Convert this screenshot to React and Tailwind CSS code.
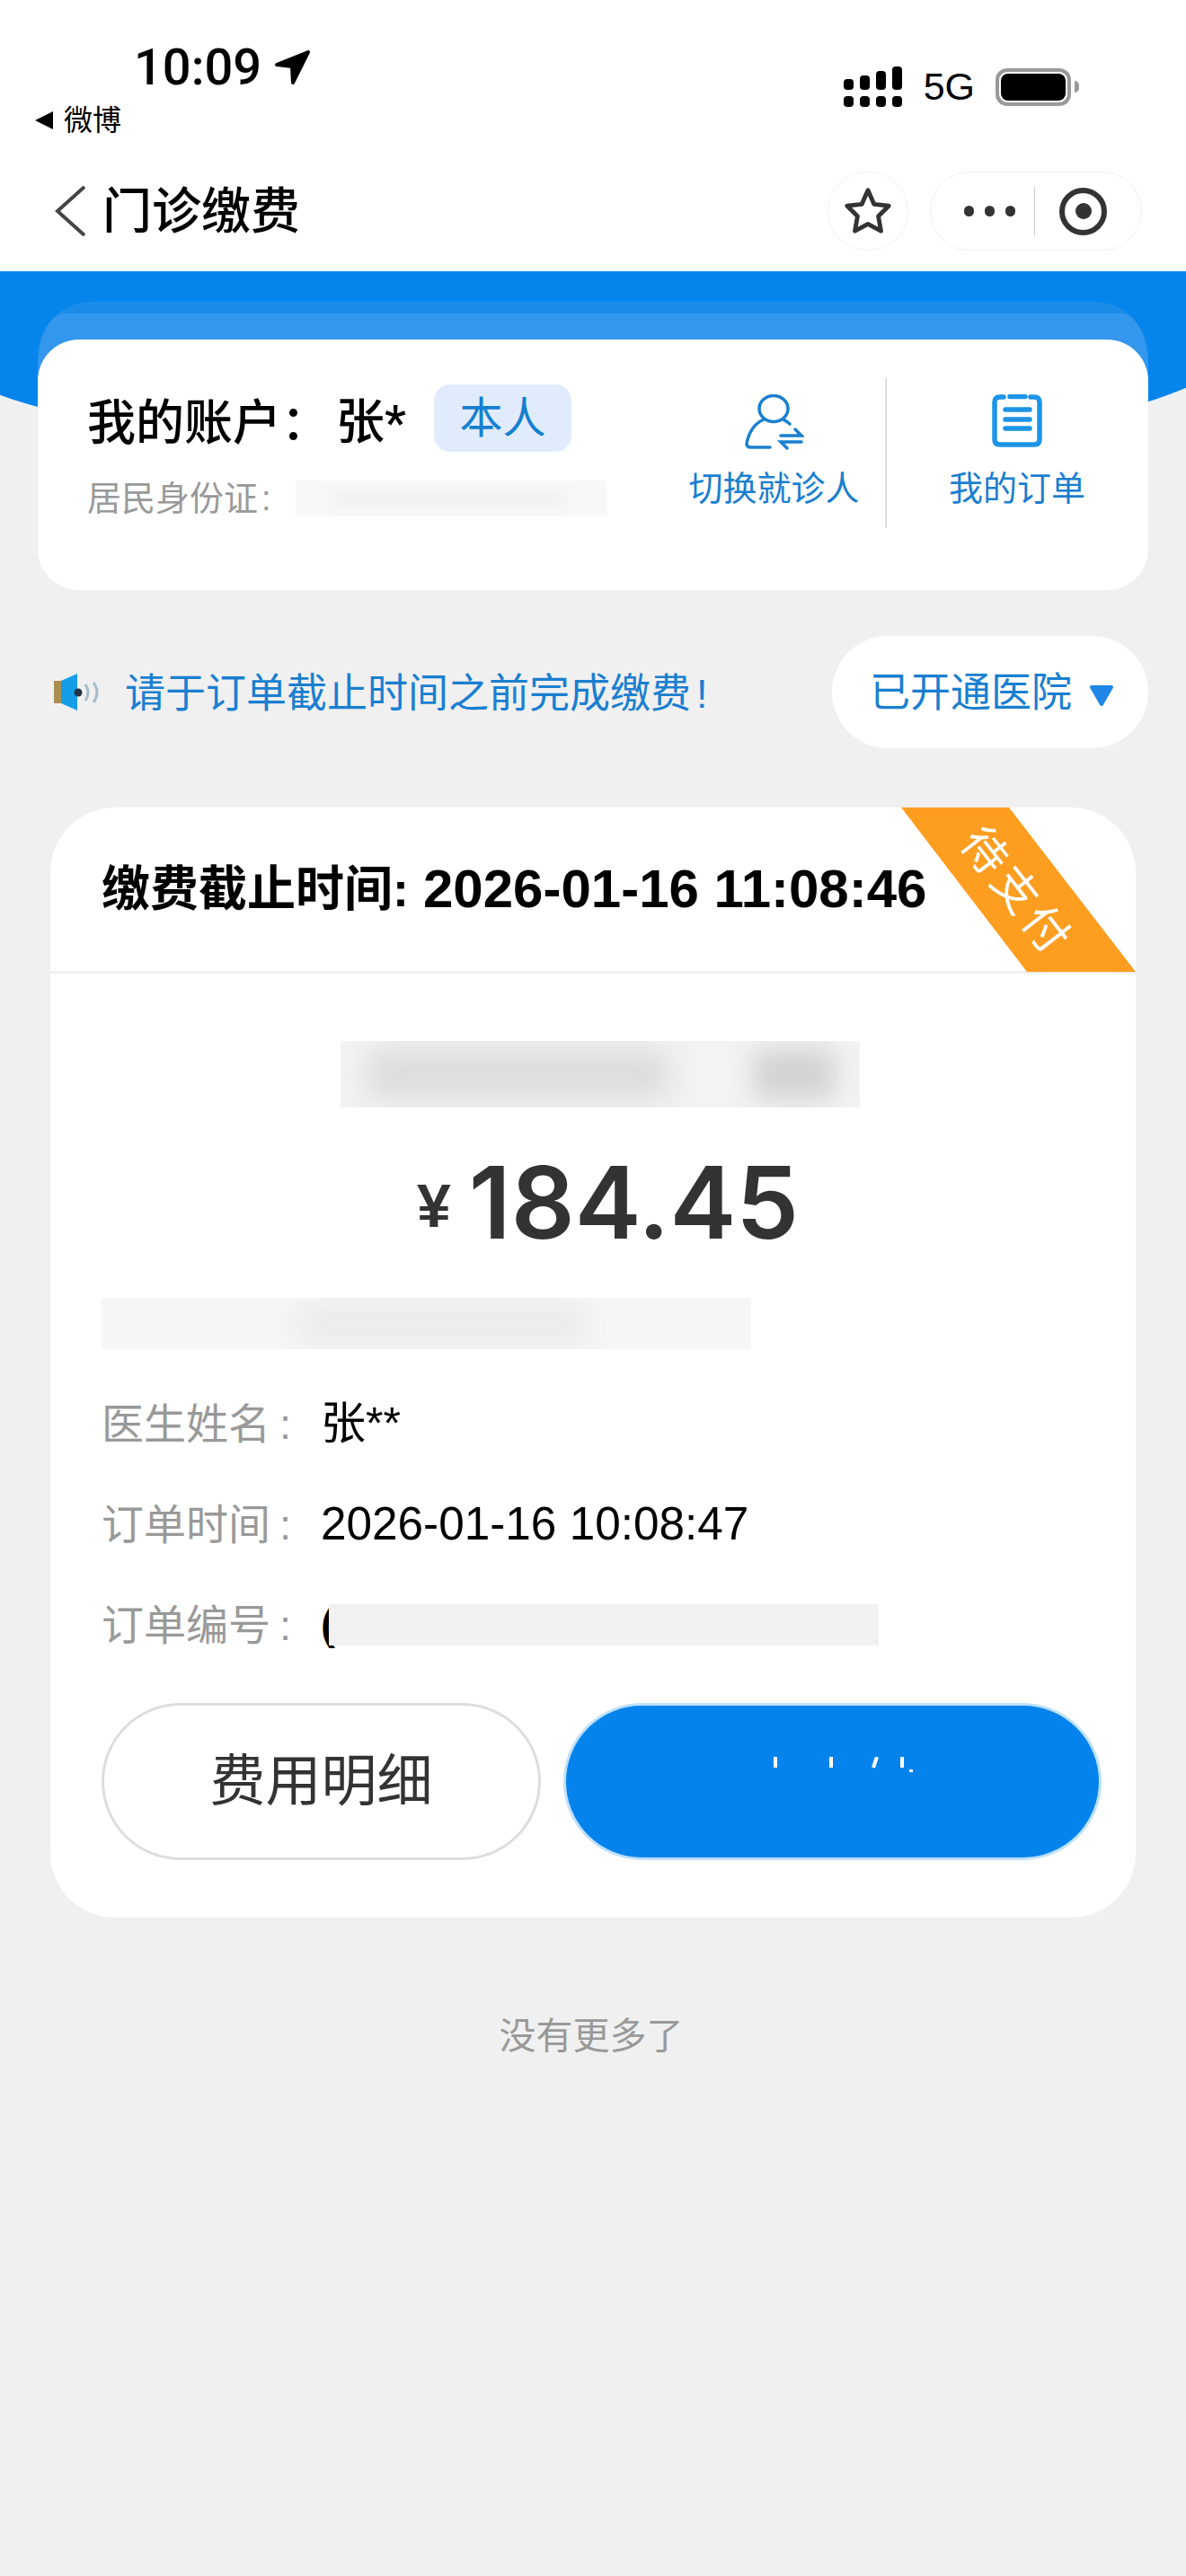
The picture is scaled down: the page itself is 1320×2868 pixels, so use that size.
const Signal = () => (
  <svg width="65" height="45" viewBox="0 0 65 45" fill="#000">
    <rect x="0" y="14" width="11" height="12" rx="4" />
    <rect x="18" y="10" width="11" height="16" rx="4" />
    <rect x="36" y="5" width="11" height="21" rx="4" />
    <rect x="54" y="0" width="11" height="26" rx="4" />
    <rect x="0" y="33" width="11" height="12" rx="4" />
    <rect x="18" y="33" width="11" height="12" rx="4" />
    <rect x="36" y="33" width="11" height="12" rx="4" />
    <rect x="54" y="33" width="11" height="12" rx="4" />
  </svg>
);

const LocationArrow = () => (
  <svg width="41" height="40" viewBox="0 0 41 40" fill="#000" stroke="#000" strokeWidth="4" strokeLinejoin="round">
    <path d="M3 17 L38 3 L21 37 L20 19 Z" />
  </svg>
);

const UserSwitch = () => (
  <svg width="66" height="62" viewBox="0 0 66 62" fill="none" stroke="#1a7fd0" strokeWidth="3.5" strokeLinecap="round">
    <ellipse cx="32" cy="16" rx="16" ry="14.5" />
    <path d="M21 28 C10 33 4 44 2 55 C2 58 4 59 7 59 L28 59" />
    <path d="M43 28 C46 30 48 31 50 33" />
    <path d="M40 46 L63 46 L56 39" />
    <path d="M63 53 L40 53 L47 60" />
  </svg>
);

const Clipboard = () => (
  <svg width="56" height="59" viewBox="0 0 56 59" fill="none" stroke="#1c94e8" strokeLinecap="round">
    <path d="M13 3 L9 3 Q3 3 3 9 L3 50 Q3 56 9 56 L47 56 Q53 56 53 50 L53 9 Q53 3 47 3 L43 3" strokeWidth="5.5" />
    <path d="M20 2.5 L37 2.5" strokeWidth="5.5" />
    <path d="M15 17 L42 17 M15 28 L42 28 M15 38 L42 38" strokeWidth="5.5" />
  </svg>
);

const Speaker = () => (
  <svg width="51" height="41" viewBox="0 0 51 41" fill="none">
    <rect x="0" y="8" width="8" height="25" fill="#a98f50" />
    <path d="M8 8 L26 0 L26 41 L8 33 Z" fill="#149ee8" />
    <circle cx="27" cy="21" r="4.5" fill="#223344" />
    <path d="M35 12 Q41 21 35 30" stroke="#a7bccb" strokeWidth="3" />
    <path d="M44 10 Q52 21 44 32" stroke="#a7bccb" strokeWidth="3" />
  </svg>
);

const DetailRow = ({ label, children }) => (
  <div className="flex h-[112px] items-center">
    <span className="w-[244px] text-[47px] leading-none text-[#999]">
      {label}
      <span className="ml-[10px]">:</span>
    </span>
    {children}
  </div>
);

export default function App() {
  return (
    <div className="relative h-[2868px] w-[1320px] overflow-hidden bg-[#f0f0f0] [font-family:'Liberation_Sans','Noto_Sans_CJK_SC',sans-serif]">
      <header className="h-[302px] bg-white">
        <div className="flex h-[191px] items-start justify-between pr-[119px]">
          <div className="pl-[39px] pt-[50px]">
            <div className="flex items-center pl-[110px]">
              <span className="text-[56px] font-medium leading-[50px] text-black [font-family:Roboto,sans-serif]">10:09</span>
              <span className="ml-[14px]"><LocationArrow /></span>
            </div>
            <div className="mt-[18px] flex items-center">
              <span className="h-0 w-0 border-y-[10px] border-r-[20px] border-y-transparent border-r-black" />
              <span className="ml-[12px] text-[32px] leading-none text-black">微博</span>
            </div>
          </div>
          <div className="mt-[74px] flex items-center">
            <Signal />
            <span className="ml-[24px] text-[43px] leading-none text-black">5G</span>
            <div className="ml-[23px] flex items-center">
              <div className="h-[42px] w-[84px] rounded-[13px] border-[4px] border-[#999] p-[2px]">
                <div className="h-full w-full rounded-[8px] bg-black" />
              </div>
              <div className="ml-[4px] h-[13px] w-[5px] rounded-r-full bg-[#999]" />
            </div>
          </div>
        </div>
        <nav className="flex h-[88px] items-center justify-between pl-[61px] pr-[49px]">
          <div className="flex items-center">
            <svg width="34" height="56" viewBox="0 0 34 56" fill="none" stroke="#444" strokeWidth="4">
              <path d="M33 1 L3 28 L33 55" />
            </svg>
            <h1 className="ml-[19px] text-[55px] font-medium leading-none text-black">门诊缴费</h1>
          </div>
          <div className="flex items-center gap-[24px]">
            <div className="flex h-[88px] w-[90px] items-center justify-center rounded-full border border-[#f2f2f2]">
              <svg width="56" height="56" viewBox="0 0 58 58" fill="none" stroke="#333" strokeWidth="5" strokeLinejoin="round">
                <path d="M29 5 L36 21 L53 23 L41 35 L44 52 L29 44 L14 52 L17 35 L5 23 L22 21 Z" />
              </svg>
            </div>
            <div className="flex h-[88px] w-[236px] items-center rounded-full border border-[#f2f2f2] pl-[37px]">
              <div className="flex gap-[12px]">
                <span className="h-[12px] w-[11px] rounded-full bg-[#333]" />
                <span className="h-[12px] w-[11px] rounded-full bg-[#333]" />
                <span className="h-[12px] w-[11px] rounded-full bg-[#333]" />
              </div>
              <span className="ml-[21px] h-[55px] w-px bg-[#ccc]" />
              <span className="ml-[27px] flex h-[53px] w-[53px] items-center justify-center rounded-full border-[6px] border-[#333]">
                <span className="h-[18px] w-[18px] rounded-full bg-[#333]" />
              </span>
            </div>
          </div>
        </nav>
      </header>

      {/* blue arc behind the account card */}
      <div className="absolute left-[-70px] top-[302px] h-[209px] w-[1440px] rounded-bl-[720px_125px] rounded-br-[720px_125px] bg-[#0584ec]" />
      <div className="absolute left-[42px] top-[336px] h-[100px] w-[1236px] rounded-t-[60px] bg-[#1b8de9]" />
      <div className="absolute left-[42px] top-[349px] h-[100px] w-[1236px] rounded-tl-[30px_60px] rounded-tr-[30px_60px] bg-[#3398ed]" />

      <main className="relative">
        <section className="mx-[42px] mt-[76px] flex h-[279px] rounded-[46px] bg-white">
          <div className="w-[710px] pl-[55px] pt-[55px]">
            <div className="flex items-center">
              <span className="text-[54px] font-medium leading-none text-black">我的账户：</span>
              <span className="ml-[7px] text-[54px] font-medium leading-none text-black">
                张<span className="[font-family:Roboto,sans-serif]">*</span>
              </span>
              <span className="ml-[31px] flex h-[75px] w-[153px] -translate-y-[5px] items-center justify-center rounded-[18px] bg-[#e0ecfb] text-[48px] leading-none text-[#1580d0]">本人</span>
            </div>
            <div className="mt-[27px] flex items-center">
              <span className="text-[38px] leading-none text-[#999]">
                居民身份证
                <span className="ml-[4px]">:</span>
              </span>
              <div className="ml-[27px] flex h-[40px] w-[347px] items-center overflow-hidden bg-[#f8f8f8]">
                <div className="ml-[40px] h-[20px] w-[260px] bg-[#f1f1f1] blur-[6px]" />
              </div>
            </div>
          </div>
          <div className="flex">
            <div className="mt-[43px] flex h-[167px] w-[233px] flex-col items-center self-start pr-[14px] pt-[18px]">
              <UserSwitch />
              <span className="mt-[24px] text-[38px] leading-none text-[#1a7fd0]">切换就诊人</span>
            </div>
            <span className="mt-[43px] h-[167px] w-[2px] bg-[#ddd]" />
            <div className="mt-[43px] flex h-[167px] w-[290px] flex-col items-center self-start pt-[18px]">
              <Clipboard />
              <span className="mt-[27px] text-[38px] leading-none text-[#1a7fd0]">我的订单</span>
            </div>
          </div>
        </section>

        <section className="mt-[51px] flex h-[125px] items-center justify-between pl-[60px] pr-[42px]">
          <div className="flex items-center">
            <Speaker />
            <p className="ml-[28px] mt-[4px] text-[45px] leading-none text-[#1a7fd0]">
              请于订单截止时间之前完成缴费
              <span className="ml-[6px]">!</span>
            </p>
          </div>
          <button className="flex h-[125px] w-[352px] items-center rounded-full bg-white pl-[42px]">
            <span className="mt-[2px] text-[45px] leading-none text-[#1a7fd0]">已开通医院</span>
            <svg className="ml-[19px] mt-[7px]" width="28" height="25" viewBox="0 0 28 25" fill="#1f86e6" stroke="#1f86e6" strokeWidth="4" strokeLinejoin="round">
              <path d="M3 3 L25 3 L14 22 Z" />
            </svg>
          </button>
        </section>

        <section className="relative mx-[56px] mt-[66px] h-[1236px] overflow-hidden rounded-[72px] bg-white">
          <div className="flex h-[185px] items-center border-b-[3px] border-[#eee] pl-[57px]">
            <span className="text-[54px] font-bold leading-none text-black">缴费截止时间:</span>
            <span className="ml-[16px] text-[60px] font-bold leading-none text-black">2026-01-16 11:08:46</span>
          </div>
          <div className="absolute right-0 top-0 h-[183px] w-[261px] bg-[#fd9e21] [clip-path:polygon(0_0,120px_0,100%_100%,140px_100%)]" />
          <span className="absolute left-[975px] top-[69px] w-[200px] rotate-[52deg] text-center text-[50px] leading-none tracking-[5px] text-white">待支付</span>

          <div className="pl-[57px] pr-[38px]">
            <div className="ml-[266px] mt-[75px] flex h-[74px] w-[578px] items-center overflow-hidden bg-[#f3f3f3]">
              <div className="ml-[30px] h-[56px] w-[335px] bg-[#dcdcdc] blur-[16px]" />
              <div className="ml-[95px] h-[56px] w-[90px] bg-[#d2d2d2] blur-[14px]" />
            </div>
            <div className="ml-[351px] mt-[64px] flex h-[84px] items-end text-[#333]">
              <span className="mb-[5px] text-[68px] font-bold leading-none">¥</span>
              <span className="ml-[20px] text-[111px] font-semibold leading-[84px] [font-family:Inter,sans-serif]">184.45</span>
            </div>
            <div className="mt-[64px] flex h-[57px] w-[723px] items-center overflow-hidden bg-[#f6f6f6]">
              <div className="ml-[220px] h-[46px] w-[320px] bg-[#ebebeb] blur-[14px]" />
            </div>
            <div className="mt-[27px]">
              <DetailRow label="医生姓名">
                <span className="text-[50px] leading-none text-black">张**</span>
              </DetailRow>
              <DetailRow label="订单时间">
                <span className="text-[51.3px] leading-none text-black">2026-01-16 10:08:47</span>
              </DetailRow>
              <DetailRow label="订单编号">
                <span className="text-[48px] font-bold leading-none text-black">(</span>
                <div className="relative ml-[-7px] h-[46px] w-[612px] bg-[#f1f1f1]" />
              </DetailRow>
            </div>
            <div className="mt-[31px] flex gap-[25px]">
              <button className="h-[175px] w-[489px] shrink-0 rounded-full border-[3px] border-[#ddd] text-[62px] leading-none text-[#333]">费用明细</button>
              <button className="flex h-[175px] w-[599px] shrink-0 items-start justify-center rounded-full border-[3px] border-[#bde0fb] bg-[#0583ec] pl-[25px] pt-[57px]">
                <svg width="160" height="20" viewBox="0 0 160 20" stroke="#fff" strokeWidth="4" fill="none">
                  <path d="M4 0 L4 12 M66 0 L66 12 M117 0 L113 12 M145 0 L145 12 M155 14 L155 17" />
                </svg>
              </button>
            </div>
          </div>
        </section>

        <p className="mt-[112px] pr-[4px] text-center text-[41px] leading-none text-[#999]">没有更多了</p>
      </main>
    </div>
  );
}
